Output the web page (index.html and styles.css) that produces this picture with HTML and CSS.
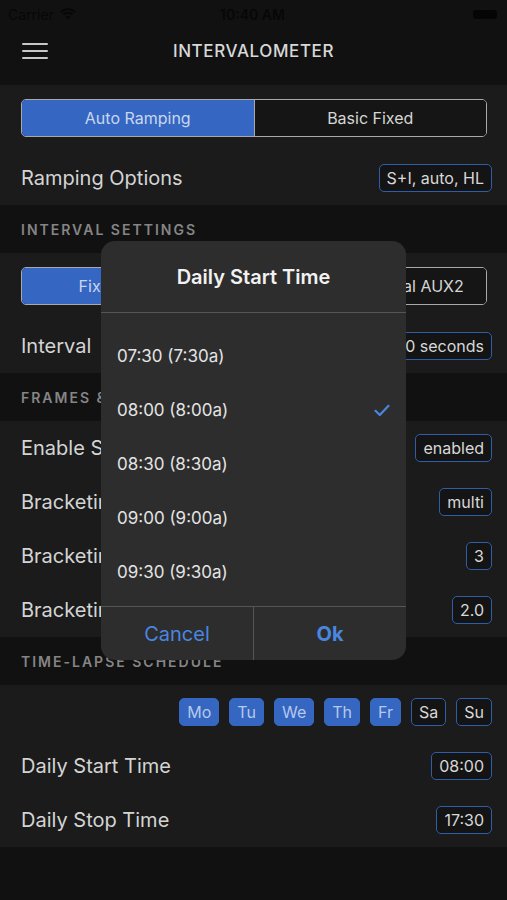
FILE: index.html
```html
<!DOCTYPE html>
<html lang="en">
<head>
    <meta charset="UTF-8">
    <meta name="viewport" content="width=device-width, initial-scale=1.0">
    <title>Intervalometer</title>
    <link rel="stylesheet" href="styles.css">
</head>
<body>
    <div class="screen">
        <div class="status-bar">
            <div class="carrier">
                Carrier
                <svg class="wifi" width="16" height="12" viewBox="0 0 16 12">
                    <path d="M8 11.5 L5.6 8.8 A3.6 3.6 0 0 1 10.4 8.8 Z" fill="#070707"/>
                    <path d="M3.4 6.6 A6.6 6.6 0 0 1 12.6 6.6" stroke="#070707" stroke-width="1.8" fill="none"/>
                    <path d="M1 4 A10 10 0 0 1 15 4" stroke="#070707" stroke-width="1.8" fill="none"/>
                </svg>
            </div>
            <div class="clock">10:40 AM</div>
            <div class="battery"></div>
        </div>

        <div class="nav-bar">
            <div class="menu-btn">
                <span></span><span></span><span></span>
            </div>
            <div class="nav-title">INTERVALOMETER</div>
        </div>

        <div class="group">
            <div class="seg-wrap">
                <div class="segmented">
                    <div class="segment active">Auto Ramping</div>
                    <div class="segment">Basic Fixed</div>
                </div>
            </div>
            <div class="row">
                <span class="label">Ramping Options</span>
                <span class="badge">S+I, auto, HL</span>
            </div>
        </div>

        <div class="section-head">INTERVAL SETTINGS</div>
        <div class="group">
            <div class="seg-wrap">
                <div class="segmented">
                    <div class="segment active">Fixed</div>
                    <div class="segment">Auto</div>
                    <div class="segment">External AUX2</div>
                </div>
            </div>
            <div class="row">
                <span class="label">Interval</span>
                <span class="badge">10 seconds</span>
            </div>
        </div>

        <div class="section-head">FRAMES &amp; EXPOSURE</div>
        <div class="group">
            <div class="row">
                <span class="label">Enable Sequence</span>
                <span class="badge">enabled</span>
            </div>
            <div class="row">
                <span class="label">Bracketing Mode</span>
                <span class="badge">multi</span>
            </div>
            <div class="row">
                <span class="label">Bracketing Frames</span>
                <span class="badge">3</span>
            </div>
            <div class="row">
                <span class="label">Bracketing Stops</span>
                <span class="badge">2.0</span>
            </div>
        </div>

        <div class="section-head">TIME-LAPSE SCHEDULE</div>
        <div class="group">
            <div class="days">
                <span class="day on">Mo</span>
                <span class="day on">Tu</span>
                <span class="day on">We</span>
                <span class="day on">Th</span>
                <span class="day on">Fr</span>
                <span class="day">Sa</span>
                <span class="day">Su</span>
            </div>
            <div class="row">
                <span class="label">Daily Start Time</span>
                <span class="badge">08:00</span>
            </div>
            <div class="row">
                <span class="label">Daily Stop Time</span>
                <span class="badge">17:30</span>
            </div>
        </div>

        <div class="dialog">
            <div class="dialog-title">Daily Start Time</div>
            <div class="dialog-list">
                <div class="option">07:30 (7:30a)</div>
                <div class="option selected">08:00 (8:00a)
                    <svg class="check" width="16" height="13" viewBox="0 0 16 13">
                        <path d="M1.5 6.8 L5.8 11 L14.5 1.8" stroke="#4a86e0" stroke-width="2.2" fill="none" stroke-linecap="round" stroke-linejoin="round"/>
                    </svg>
                </div>
                <div class="option">08:30 (8:30a)</div>
                <div class="option">09:00 (9:00a)</div>
                <div class="option">09:30 (9:30a)</div>
            </div>
            <div class="dialog-buttons">
                <div class="dlg-btn">Cancel</div>
                <div class="dlg-btn strong">Ok</div>
            </div>
        </div>
    </div>
</body>
</html>
```

FILE: styles.css
```css
body {
    margin: 0;
    background-color: #111111;
    font-family: Inter, "Liberation Sans", sans-serif;
    color: #dcdcdc;
}
.screen {
    position: relative;
    width: 507px;
    height: 900px;
    overflow: hidden;
    background-color: #111111;
}
.status-bar {
    height: 28px;
    display: flex;
    align-items: center;
    justify-content: space-between;
    padding: 0 10px 0 8px;
    font-size: 14px;
    color: #070707;
}
.carrier {
    display: flex;
    align-items: center;
    gap: 6px;
    width: 120px;
}
.clock {
    font-weight: 600;
}
.battery {
    width: 24px;
    height: 9px;
    background: #050505;
    border-radius: 3px;
    margin-left: 96px;
}
.nav-bar {
    position: relative;
    height: 57px;
    box-sizing: border-box;
    padding-bottom: 12px;
    display: flex;
    align-items: center;
    justify-content: center;
}
.menu-btn {
    position: absolute;
    left: 22px;
    top: 15px;
    width: 26px;
    display: flex;
    flex-direction: column;
    gap: 5px;
}
.menu-btn span {
    height: 2px;
    background: #c8c8c8;
    border-radius: 1px;
}
.nav-title {
    font-size: 17px;
    font-weight: 500;
    letter-spacing: 0.6px;
    color: #d8d8d8;
}
.group {
    background-color: #1b1b1b;
}
.seg-wrap {
    padding: 14px 20px 14px 21px;
}
.segmented {
    display: flex;
    height: 38px;
    border: 1.5px solid #a9a9a9;
    border-radius: 5px;
    overflow: hidden;
    box-sizing: border-box;
}
.segment {
    flex: 1;
    display: flex;
    align-items: center;
    justify-content: center;
    font-size: 16px;
    color: #d6d6d6;
    background: #151515;
    border-left: 1.5px solid #a9a9a9;
}
.segment:first-child {
    border-left: none;
}
.segment.active {
    background: #3466c2;
    color: #c9d6ee;
}
.row {
    height: 54px;
    display: flex;
    align-items: center;
    justify-content: space-between;
    padding: 0 15px 0 21px;
}
.label {
    font-size: 20px;
    color: #d4d4d4;
}
.badge {
    height: 28px;
    display: flex;
    align-items: center;
    padding: 0 7px;
    border: 1.5px solid #2f5ea8;
    border-radius: 5px;
    background: #141414;
    font-size: 16px;
    color: #d8d8d8;
    box-sizing: border-box;
}
.section-head {
    height: 48px;
    box-sizing: border-box;
    padding: 16px 21px 0;
    font-size: 14px;
    font-weight: 600;
    letter-spacing: 2px;
    color: #858585;
}
.days {
    height: 54px;
    display: flex;
    align-items: center;
    justify-content: flex-end;
    gap: 10px;
    padding: 0 15px;
}
.day {
    height: 28px;
    min-width: 31px;
    padding: 0 7px;
    display: flex;
    align-items: center;
    justify-content: center;
    border: 1.5px solid #2f5ea8;
    border-radius: 5px;
    background: #141414;
    font-size: 16px;
    color: #d8d8d8;
    box-sizing: border-box;
}
.day.on {
    background: #3466c2;
    border-color: #3466c2;
    color: #b7c9ea;
}
.dialog {
    position: absolute;
    left: 101px;
    top: 241px;
    width: 305px;
    background: #2d2d2d;
    border-radius: 14px;
    overflow: hidden;
}
.dialog-title {
    height: 71px;
    display: flex;
    align-items: center;
    justify-content: center;
    font-size: 20px;
    font-weight: 600;
    color: #f2f2f2;
    border-bottom: 1.5px solid #555555;
}
.dialog-list {
    padding: 16px 0 7px;
    border-bottom: 1.5px solid #555555;
}
.option {
    height: 54px;
    display: flex;
    align-items: center;
    justify-content: space-between;
    padding: 0 16px;
    font-size: 17px;
    color: #e4e4e4;
}
.dialog-buttons {
    display: flex;
    height: 53px;
}
.dlg-btn {
    flex: 1;
    display: flex;
    align-items: center;
    justify-content: center;
    font-size: 20px;
    color: #4a86e0;
}
.dlg-btn + .dlg-btn {
    border-left: 1.5px solid #555555;
}
.dlg-btn.strong {
    font-weight: 700;
}
```
